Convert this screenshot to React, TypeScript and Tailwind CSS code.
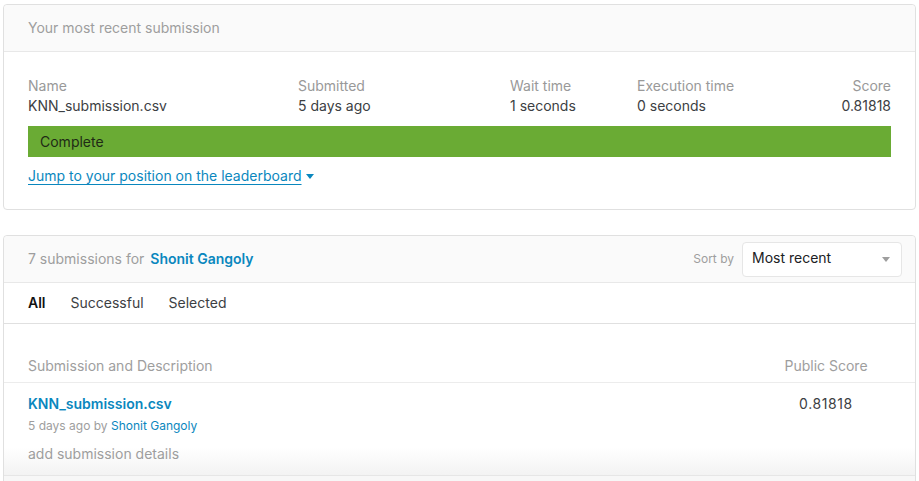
import React from 'react';

const Caret = ({ className }: { className?: string }) => (
  <svg className={className} width="8" height="5" viewBox="0 0 8 5" fill="currentColor">
    <path d="M0 0h8L4 5z" />
  </svg>
);

const Stat = ({ label, value, right }: { label: string; value: string; right?: boolean }) => (
  <div className={right ? 'text-right' : ''}>
    <div className="text-[#999999]">{label}</div>
    <div className="text-[#3c4043]">{value}</div>
  </div>
);

const App = () => {
  return (
    <div className="w-[919px] h-[481px] overflow-hidden bg-white pt-[4px] px-[3px] text-[14px] leading-[20px] font-['Inter','Liberation_Sans',sans-serif]">
      <section className="border border-[#e0e0e0] rounded-[4px] bg-white">
        <div className="h-[47px] bg-[#fafafa] border-b border-[#e8e8e8] rounded-t-[4px] px-[24px] flex items-center text-[#9e9e9e]">
          Your most recent submission
        </div>
        <div className="px-[24px] pt-[24px] pb-[23px]">
          <div className="flex">
            <div className="w-[270px]"><Stat label="Name" value="KNN_submission.csv" /></div>
            <div className="w-[212px]"><Stat label="Submitted" value="5 days ago" /></div>
            <div className="w-[127px]"><Stat label="Wait time" value="1 seconds" /></div>
            <div className="flex-1"><Stat label="Execution time" value="0 seconds" /></div>
            <Stat label="Score" value="0.81818" right />
          </div>
          <div className="mt-[10px] h-[31px] bg-[#6aab34] px-[12px] flex items-center text-[#1f2a16]">
            Complete
          </div>
          <div className="mt-[9px] h-[20px] flex items-center">
            <a className="text-[#0a87be] underline underline-offset-[3px] decoration-[1px] flex items-center gap-[4px]" href="#">
              Jump to your position on the leaderboard
              <Caret className="text-[#0a87be] mt-[1px]" />
            </a>
          </div>
        </div>
      </section>

      <section className="mt-[25px] border border-[#e0e0e0] rounded-t-[4px] bg-white">
        <div className="h-[47px] bg-[#fafafa] border-b border-[#e8e8e8] rounded-t-[4px] pl-[24px] pr-[13px] flex items-center">
          <div className="flex-1 text-[#9e9e9e]">
            7 submissions for <span className="text-[#0a87be] font-semibold ml-[2px]">Shonit Gangoly</span>
          </div>
          <span className="text-[12px] text-[#9e9e9e] mr-[8px]">Sort by</span>
          <div className="w-[160px] h-[35px] bg-white border border-[#e6e6e6] rounded-[4px] pl-[9px] pr-[11px] flex items-center justify-between text-[#202124]">
            <span className="-mt-[2px]">Most recent</span>
            <Caret className="text-[#9e9e9e]" />
          </div>
        </div>
        <div className="h-[41px] border-b border-[#e0e0e0] px-[24px] flex items-center gap-[25px]">
          <span className="font-semibold text-[#111]">All</span>
          <span className="text-[#3c4043]">Successful</span>
          <span className="text-[#3c4043]">Selected</span>
        </div>
        <div className="h-[59px] border-b border-[#ececec] px-[24px] pb-[6px] flex items-end text-[#9e9e9e]">
          <div className="flex-1">Submission and Description</div>
          <div className="w-[100px] text-center mr-[15px]">Public Score</div>
        </div>
        <div className="h-[93px] bg-gradient-to-b from-white from-70% to-[#f3f3f3] border-b border-[#e6e6e6] px-[24px] pt-[11px] flex">
          <div className="flex-1">
            <div className="text-[#0a87be] font-semibold">KNN_submission.csv</div>
            <div className="text-[12px] text-[#9e9e9e] mt-[2px]">
              5 days ago by <span className="text-[#0a87be]">Shonit Gangoly</span>
            </div>
            <div className="text-[#9e9e9e] mt-[8px]">add submission details</div>
          </div>
          <div className="w-[100px] text-center mr-[15px] text-[#3c4043] tracking-[0.6px]">0.81818</div>
        </div>
        <div className="h-[20px] bg-[#f7f7f7]" />
      </section>
    </div>
  );
};

export default App;
